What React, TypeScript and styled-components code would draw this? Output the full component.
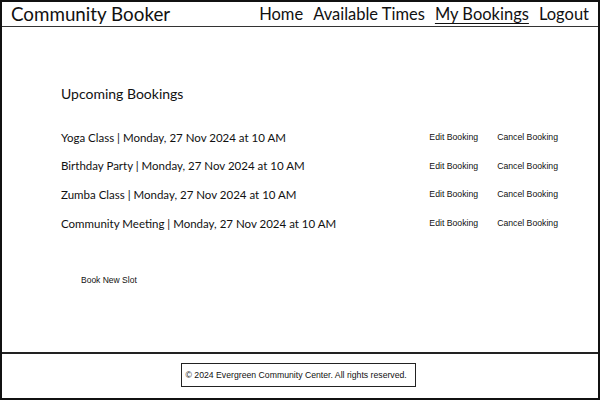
import React from "react";
import styled, { createGlobalStyle } from "styled-components";

const GlobalStyle = createGlobalStyle`
  html, body {
    margin: 0;
    padding: 0;
    background: #ffffff;
  }
  * {
    box-sizing: border-box;
  }
`;

const Frame = styled.div`
  width: 600px;
  height: 400px;
  border: 2px solid #111;
  display: flex;
  flex-direction: column;
  font-family: "Lato", "Open Sans", sans-serif;
  color: #111;
  background: #fff;
`;

const Header = styled.header`
  height: 25px;
  display: flex;
  align-items: center;
  justify-content: space-between;
  padding: 0 9px 0 9px;
  border-bottom: 1.5px solid #333;
`;

const Brand = styled.div`
  font-size: 18.8px;
  line-height: 1;
`;

const Nav = styled.nav`
  display: flex;
  gap: 10px;
`;

const NavLink = styled.a<{ $active?: boolean }>`
  font-size: 16.5px;
  line-height: 1;
  color: #111;
  text-decoration: ${(p) => (p.$active ? "underline" : "none")};
  text-underline-offset: 3px;
  text-decoration-thickness: 1px;
`;

const Main = styled.main`
  flex: 1;
  padding: 60px 40px 0 59px;
  display: flex;
  flex-direction: column;
`;

const Title = styled.h2`
  margin: 0 0 29px;
  font-size: 14px;
  font-weight: 400;
  line-height: 1;
`;

const List = styled.div`
  display: flex;
  flex-direction: column;
  gap: 14px;
`;

const Row = styled.div`
  display: flex;
  align-items: center;
  height: 14.7px;
`;

const Desc = styled.span`
  flex: 1;
  font-size: 11.5px;
  line-height: 1;
  white-space: nowrap;
`;

const Actions = styled.div`
  display: flex;
  flex-shrink: 0;
  gap: 19px;
`;

const Action = styled.button`
  border: none;
  background: none;
  padding: 0;
  font-family: "Liberation Sans", Arial, sans-serif;
  font-size: 8.7px;
  line-height: 1;
  color: #111;
  white-space: nowrap;
  cursor: pointer;
`;

const BookNew = styled(Action)`
  align-self: flex-start;
  margin: 45px 0 0 20px;
  font-size: 8.5px;
`;

const Footer = styled.footer`
  height: 46px;
  border-top: 2px solid #222;
  display: flex;
  justify-content: center;
  align-items: center;
  padding-right: 4px;
`;

const FooterBox = styled.div`
  width: 235px;
  height: 24px;
  border: 1.5px solid #222;
  display: flex;
  align-items: center;
  padding-left: 4px;
  font-family: "Liberation Sans", Arial, sans-serif;
  font-size: 8.7px;
  margin-top: -2px;
  white-space: nowrap;
`;

const bookings = [
  "Yoga Class | Monday, 27 Nov 2024 at 10 AM",
  "Birthday Party | Monday, 27 Nov 2024 at 10 AM",
  "Zumba Class | Monday, 27 Nov 2024 at 10 AM",
  "Community Meeting | Monday, 27 Nov 2024 at 10 AM",
];

export default function App() {
  return (
    <>
      <GlobalStyle />
      <Frame>
        <Header>
          <Brand>Community Booker</Brand>
          <Nav>
            <NavLink>Home</NavLink>
            <NavLink>Available Times</NavLink>
            <NavLink $active>My Bookings</NavLink>
            <NavLink>Logout</NavLink>
          </Nav>
        </Header>
        <Main>
          <Title>Upcoming Bookings</Title>
          <List>
            {bookings.map((b) => (
              <Row key={b}>
                <Desc>{b}</Desc>
                <Actions>
                  <Action>Edit Booking</Action>
                  <Action>Cancel Booking</Action>
                </Actions>
              </Row>
            ))}
          </List>
          <BookNew>Book New Slot</BookNew>
        </Main>
        <Footer>
          <FooterBox>© 2024 Evergreen Community Center. All rights reserved.</FooterBox>
        </Footer>
      </Frame>
    </>
  );
}
